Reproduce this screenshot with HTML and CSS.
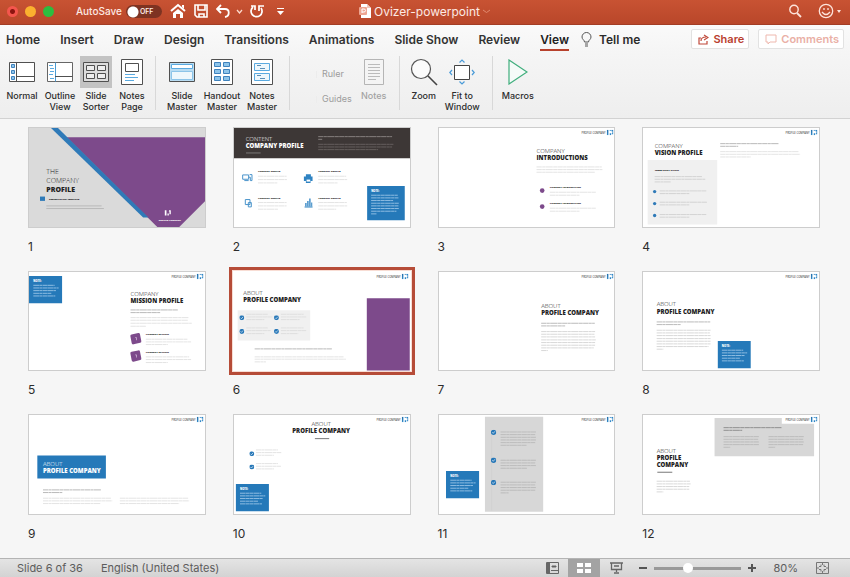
FILE: index.html
```html
<!DOCTYPE html>
<html lang="en">
<head>
<meta charset="utf-8">
<title>Ovizer-powerpoint</title>
<link rel="stylesheet" href="styles.css">
</head>
<body>
<svg class="defs" aria-hidden="true">
  <defs>
    <linearGradient id="blue" x1="0" y1="0" x2="1" y2="1"><stop offset="0" stop-color="#1b5f9a"/><stop offset="1" stop-color="#3d9ad8"/></linearGradient>
    <symbol id="logo" viewBox="0 0 20 17">
      <path d="M0 0h5v17H0z" fill="url(#blue)"/>
      <path d="M9 11h4v6H9zM9 0h3v4H9zM14 0h6v14h-5v-3h2V5h-3z" fill="#2f86c6"/>
    </symbol>
    <symbol id="brand" viewBox="0 0 98 20" overflow="visible">
      <text class="brand-text" x="72" y="13" text-anchor="end">PROFILE COMPANY</text>
      <use href="#logo" x="76" y="1" width="20" height="17"/>
    </symbol>
    <symbol id="check" viewBox="0 0 16 16">
      <circle cx="8" cy="8" r="8" fill="#2878b8"/>
      <path d="M4 8l3 3 5-6" fill="none" stroke="#fff" stroke-width="2"/>
    </symbol>
    <symbol id="note" viewBox="0 0 100 83">
      <path d="M0 0h100v83H0z" fill="#2579b9"/>
      <text class="note-title" x="13" y="17">NOTE:</text>
      <path class="note-line" d="M13 28h64M13 36h76M13 44h68M13 52h54M13 60h66"/>
    </symbol>
  </defs>
</svg>

<header class="titlebar">
  <div class="title-left">
    <span class="lights"><i class="close"></i><i class="minimise"></i><i class="maximise"></i></span>
    <label class="autosave">AutoSave <span class="toggle"><input type="checkbox" aria-label="AutoSave"><span>OFF</span></span></label>
    <div class="quick">
      <button aria-label="Home"><svg width="16" height="16" viewBox="0 0 16 16"><path d="M1 8l7-6 7 6" fill="none" stroke="#fff" stroke-width="2"/><path d="M3 10l5-4 5 4v5h-3v-4H6v4H3zM12 2h2v4l-2-2z" fill="#fff"/></svg></button>
      <button aria-label="Save"><svg width="14" height="14" viewBox="0 0 14 14"><path d="M1 1h12v12H3l-2-2zM4 1v5h7V1M5 13v-3h5v3" fill="none" stroke="#fff" stroke-width="1.600"/></svg></button>
      <button class="undo" aria-label="Undo"><svg width="14" height="14" viewBox="0 0 14 14"><path d="M5 1L1 5l4 4M1 5h8c5 0 5 7 0 8" fill="none" stroke="#fff" stroke-width="1.800"/></svg></button>
      <button class="chev" aria-label="Undo history"><svg width="7" height="5" viewBox="0 0 7 5"><path d="M1 1l2.500 3L6 1" fill="none" stroke="#fbd9cc" stroke-width="1.300"/></svg></button>
      <button class="redo" aria-label="Repeat"><svg width="15" height="15" viewBox="0 0 15 15"><path d="M3 3a5.500 5.500 0 1 0 8 1M1 2h4v4M9 7V2h5" fill="none" stroke="#fff" stroke-width="1.700"/></svg></button>
      <button class="more" aria-label="Customise toolbar"><svg width="7" height="7" viewBox="0 0 7 7"><path d="M0 0h7v1H0zM0 3h7L3.500 7z" fill="#fff"/></svg></button>
    </div>
  </div>
  <div class="doc">
    <svg width="12" height="14" viewBox="0 0 12 14"><path d="M2 0h6l4 4v10H2z" fill="#fff"/><path d="M8 0v4h4" fill="#f0c8bc"/><rect x="0" y="3" width="8" height="8" rx="1" fill="#eda592"/><path d="M3 9V5h2a1 1 0 0 1 0 3H3" fill="none" stroke="#fff"/></svg>
    <h1>Ovizer-powerpoint</h1>
    <svg width="7" height="5" viewBox="0 0 7 5"><path d="M0 1l3.500 2.500L7 1" fill="none" stroke="#e08a70"/></svg>
  </div>
  <div class="title-right">
    <button aria-label="Search"><svg width="14" height="14" viewBox="0 0 14 14"><circle cx="6" cy="5.500" r="4.200" fill="none" stroke="#fde3da" stroke-width="1.400"/><path d="M9 9l4 4" stroke="#fde3da" stroke-width="1.800"/></svg></button>
    <button class="smile" aria-label="Feedback"><svg width="24" height="16" viewBox="0 0 24 16"><circle cx="8" cy="8" r="6.700" fill="none" stroke="#fde3da" stroke-width="1.300"/><path d="M4 9q4 5 8 0M6 5v2M10 5v2" fill="none" stroke="#fde3da" stroke-width="1.300"/><path d="M19 7h4l-2 3z" fill="#fde3da"/></svg></button>
  </div>
</header>

<nav class="tabs">
  <a href="#home">Home</a><a href="#insert">Insert</a><a href="#draw">Draw</a><a href="#design">Design</a><a href="#transitions">Transitions</a><a href="#animations">Animations</a><a href="#slideshow">Slide Show</a><a href="#review">Review</a><a href="#view" class="current" aria-current="page">View</a>
  <button class="tell"><svg width="11" height="15" viewBox="0 0 11 15"><path d="M3.500 10C3.500 8 1 7.500 1 5a4.500 4.500 0 0 1 9 0c0 2.500-2.500 3-2.500 5zM4 12h3M4 14h3" fill="none" stroke="#555"/></svg>Tell me</button>
  <div class="collab">
    <button class="share"><svg width="11" height="11" viewBox="0 0 11 11"><path d="M3 4H1v6h8V7M3 7c0-3 2-4 5-4M6 1l4 2.500L6 6" fill="none" stroke="#c0493a" stroke-width="1.200"/></svg>Share</button>
    <button class="comments"><svg width="12" height="11" viewBox="0 0 12 11"><path d="M1 1h10v7H5L3 10V8H1z" fill="none" stroke="#eeb8ae"/></svg>Comments</button>
  </div>
</nav>

<section class="ribbon" aria-label="View">
  <div class="group">
    <button class="tool"><span class="icon"><svg width="26" height="22" viewBox="0 0 26 22"><path d="M.5 1.500h25v19H.5zM7.500 1.500v19M7.500 15.500h18" fill="#fff" stroke="#505050"/><path d="M2.500 3.500h3v3h-3zM2.500 9.500h3v3h-3zM2.500 15.500h3v3h-3z" fill="#8dc4ea" stroke="#3f82bd"/></svg></span>Normal</button>
    <button class="tool"><span class="icon"><svg width="26" height="22" viewBox="0 0 26 22"><path d="M.5 1.500h25v19H.5z" fill="#fff" stroke="#666"/><path d="M8.500 1.500v19" stroke="#4b9bd2"/><path d="M8 15.500h17.500" stroke="#505050"/><path d="M2 4.500h4M3 7.500h4M3 10.500h4M2 13.500h4M3 17.500h4" stroke="#5aaae0"/></svg></span>Outline<br>View</button>
    <button class="tool active" aria-pressed="true"><span class="icon"><svg width="26" height="22" viewBox="0 0 26 22"><path d="M.5 1.500h25v19H.5z" fill="#ddd" stroke="#505050"/><path d="M3.500 4.500h8v5h-8zM14.500 4.500h8v5h-8zM3.500 12.500h8v5h-8zM14.500 12.500h8v5h-8z" fill="#eee" stroke="#505050"/></svg></span>Slide<br>Sorter</button>
    <button class="tool"><span class="icon"><svg width="22" height="26" viewBox="0 0 22 26"><path d="M.5.5h21v25H.5z" fill="#fff" stroke="#505050"/><path d="M4.500 4.500h13v8h-13z" fill="#fff" stroke="#505050"/><path d="M4 15.500h10M4 18.500h13M4 21.500h9" stroke="#5aaae0"/></svg></span>Notes<br>Page</button>
  </div>
  <div class="group masters">
    <button class="tool"><span class="icon"><svg width="26" height="22" viewBox="0 0 26 22"><path d="M.5 1.500h25v19H.5z" fill="#b9dcf2" stroke="#505050"/><path d="M2.500 3.500h21v4h-21z" fill="#fff" stroke="#5aaae0"/><path d="M2.500 10.500h21v8h-21z" fill="#eef7fc" stroke="#8cc4e8"/></svg></span>Slide<br>Master</button>
    <button class="tool"><span class="icon"><svg width="22" height="26" viewBox="0 0 22 26"><path d="M.5.500h21v25H.5z" fill="#fff" stroke="#505050"/><path d="M3.500 3.500h6v4h-6zM12.500 3.500h6v4h-6zM3.500 10.500h6v4h-6zM12.500 10.500h6v4h-6zM3.500 17.500h6v4h-6zM12.500 17.500h6v4h-6z" fill="#8dc4ea" stroke="#3f82bd"/></svg></span>Handout<br>Master</button>
    <button class="tool"><span class="icon"><svg width="22" height="26" viewBox="0 0 22 26"><path d="M.5.500h21v25H.5z" fill="#fff" stroke="#505050"/><path d="M3.500 4.500h15v7h-15zM3.500 14.500h15v7h-15z" fill="#eef7fc" stroke="#5aaae0"/><path d="M6 6.500h4M9 9.500h5M6 16.500h4M9 19.500h5" stroke="#5a8fb8"/></svg></span>Notes<br>Master</button>
  </div>
  <div class="group show">
    <div class="checks"><label><input type="checkbox" disabled>Ruler</label><label><input type="checkbox" disabled>Guides</label></div>
    <button class="tool" disabled><span class="icon"><svg width="20" height="26" viewBox="0 0 20 26"><path d="M.5.500h19v25H.5z" fill="#f4f4f4" stroke="#b5b5b5"/><path d="M4 5.500h12M4 8.500h12M4 11.500h12M4 14.500h12M4 17.500h12M4 20.500h8" stroke="#bbb"/></svg></span>Notes</button>
  </div>
  <div class="group zoom">
    <button class="tool"><span class="icon"><svg width="28" height="28" viewBox="0 0 28 28"><circle cx="11" cy="11" r="9.500" fill="#fbfbfb" stroke="#555" stroke-width="1.200"/><path d="M18 18l9 9" stroke="#444" stroke-width="1.600"/></svg></span>Zoom</button>
    <button class="tool"><span class="icon"><svg width="26" height="26" viewBox="0 0 26 26"><path d="M5.500 6.500h15v14h-15z" fill="#fff" stroke="#444"/><path d="M10.500 3.500L13 1l2.500 2.500M10.500 22.500L13 25l2.500-2.500M3 11L.800 13.500 3 16M23 11l2.200 2.500L23 16" fill="none" stroke="#4a9bd8" stroke-width="1.200"/></svg></span>Fit to<br>Window</button>
  </div>
  <div class="group macros">
    <button class="tool"><span class="icon"><svg width="20" height="26" viewBox="0 0 20 26"><path d="M1 1v24l18-12z" fill="#f5fbf8" stroke="#3fae7c" stroke-width="1.200"/></svg></span>Macros</button>
  </div>
</section>

<main class="sorter">
  <ol class="slides">
    <li><button class="slide" aria-label="Slide 1"><svg viewBox="0 0 534 302">
      <path d="M0 0h534v302H0z" fill="#dadada"/>
      <path d="M116 31h418v190l-81 81h-63z" fill="#7d4a8b"/>
      <path d="M66 0h21l275 272h-16z" fill="#2f7ab8"/>
      <text class="light big" x="55" y="140">THE</text><text class="light big" x="55" y="168">COMPANY</text><text class="heavy big" x="55" y="195">PROFILE</text>
      <path d="M36 209h15v13H36z" fill="#2f7ab8"/><text class="label" x="63" y="218">PRESENTATION TEMPLATE</text>
      <path d="M55 237h166M55 245h173" stroke="#b9b9b9" stroke-width="3"/>
      <path d="M411 250h5v16h-5zM419 260h4v6h-4zM424 250h5v12h-4v-8h-2z" fill="#fff"/><text class="label white" x="393" y="283">PROFILE COMPANY</text>
    </svg></button><span>1</span></li>
    <li><button class="slide" aria-label="Slide 2"><svg viewBox="0 0 534 302">
      <path d="M0 0h534v94H0z" fill="#3d3736"/>
      <text class="light white" x="38" y="42">CONTENT</text><text class="heavy white" x="38" y="62">COMPANY PROFILE</text>
      <path d="M39 78h44" stroke="#999" stroke-width="2"/>
      <path class="copy pale" d="M256 29h222M256 37h12"/><path class="copy faint" d="M256 52h226M256 60h222M256 68h180"/>
      <text class="label" x="75" y="136">COMPANY PROFILE</text><text class="label" x="256" y="136">COMPANY PROFILE</text>
      <text class="label" x="75" y="216">COMPANY PROFILE</text><text class="label" x="256" y="216">COMPANY PROFILE</text>
      <path class="copy" d="M75 148h86M75 158h87M75 168h58M256 148h84M256 158h87M256 168h58M75 227h86M75 237h86M75 247h60M256 227h86M256 237h87M256 247h54"/>
      <path d="M29 144h18v13H29zM34 161h13M47 151h5v10h5v-18h-7M37 218h14v15H37zM46 227h9v13h-9z" fill="none" stroke="#4a94cb" stroke-width="3"/>
      <path d="M219 142h15v7h5v13h-6v6h-14v-6h-6v-13h6zM215 239h24v3h-24zM217 228h4v10h-4zM223 222h4v16h-4zM229 215h4v23h-4zM235 227h3v11h-3z" fill="#2f83c2"/><path d="M221 158h11v6h-11z" fill="#fff"/>
      <path d="M403 177h113v103H403z" fill="#2579b9"/><text class="note-title" x="415" y="194">NOTE:</text>
      <path class="note-line" d="M415 205h80M415 213h82M415 221h66M415 229h84M415 237h82M415 245h84M415 253h76M415 261h16"/>
    </svg></button><span>2</span></li>
    <li><button class="slide" aria-label="Slide 3"><svg viewBox="0 0 534 302">
      <use href="#brand" x="431" y="7" width="98" height="20"/>
      <text class="light" x="296" y="77">COMPANY</text><text class="heavy" x="296" y="98">INTRODUCTIONS</text>
      <path class="copy" d="M296 120h196M296 128h198M296 136h176M336 196h138M336 205h90M336 244h138M336 253h90"/>
      <text class="label" x="336" y="184">COMPANY INTRODUCTION</text><text class="label" x="336" y="232">COMPANY INTRODUCTION</text>
      <circle cx="313" cy="191" r="7" fill="#7d4a8b"/><circle cx="313" cy="239" r="7" fill="#7d4a8b"/>
    </svg></button><span>3</span></li>
    <li><button class="slide" aria-label="Slide 4"><svg viewBox="0 0 534 302">
      <use href="#brand" x="431" y="7" width="98" height="20"/>
      <path d="M17 99h209v194H17z" fill="#f0f0f0"/>
      <text class="light" x="38" y="62">COMPANY</text><text class="heavy" x="38" y="83">VISION PROFILE</text>
      <text class="label" x="38" y="133">THREE POINT VISION</text>
      <path class="copy dark" d="M235 50h176M235 58h54"/><path class="copy" d="M235 74h235M235 82h240M235 90h92"/>
      <path class="copy mid" d="M38 149h142M38 157h153M38 165h48M53 192h140M53 200h90M53 226h142M53 234h90M53 263h140M53 271h90"/>
      <circle cx="38" cy="194" r="5" fill="#2f7ab8"/><circle cx="38" cy="230" r="5" fill="#2f7ab8"/><circle cx="38" cy="266" r="5" fill="#2f7ab8"/>
    </svg></button><span>4</span></li>
    <li><button class="slide" aria-label="Slide 5"><svg viewBox="0 0 534 302">
      <use href="#brand" x="431" y="7" width="98" height="20"/><use href="#note" x="3" y="15" width="100" height="83"/>
      <text class="light" x="308" y="76">COMPANY</text><text class="heavy" x="308" y="97">MISSION PROFILE</text>
      <path class="copy dark" d="M308 117h142M308 125h90"/>
      <path class="copy" d="M308 140h174M308 148h172M308 157h184M308 166h46M354 205h126M354 213h136M354 221h66M354 258h130M354 266h136M354 275h66"/>
      <text class="label" x="354" y="191">COMPANY MISSION</text><text class="label" x="354" y="245">COMPANY MISSION</text>
      <path d="M312 195l20-4 4 20-20 5zM312 247l20-4 4 20-20 5z" fill="#7d4a8b" stroke="#7d4a8b" stroke-width="9" stroke-linejoin="round"/>
      <path d="M322 200h4v8M322 252h4v8" fill="none" stroke="#dcc6e2" stroke-width="2"/>
    </svg></button><span>5</span></li>
    <li><button class="slide selected" aria-label="Slide 6" aria-pressed="true"><svg viewBox="0 0 534 302">
      <use href="#brand" x="431" y="7" width="98" height="20"/>
      <path d="M402 82h129v217H402z" fill="#7d4a8b"/><path d="M14 118h218v91H14z" fill="#f0f0f0"/>
      <text class="light" x="31" y="72">ABOUT</text><text class="heavy" x="31" y="93">PROFILE COMPANY</text>
      <use href="#check" x="19" y="133" width="15" height="15"/><use href="#check" x="123" y="133" width="15" height="15"/><use href="#check" x="19" y="174" width="15" height="15"/><use href="#check" x="123" y="174" width="15" height="15"/>
      <path class="copy" d="M40 130h65M40 138h78M40 146h54M144 130h68M144 138h76M144 146h56M40 171h65M40 179h73M40 188h54M144 171h68M144 179h76M144 188h52M65 258h267M65 265h274M65 273h34"/>
      <path class="copy dark" d="M65 234h232"/>
    </svg></button><span>6</span></li>
    <li><button class="slide" aria-label="Slide 7"><svg viewBox="0 0 534 302">
      <use href="#brand" x="431" y="7" width="98" height="20"/>
      <text class="light" x="310" y="110">ABOUT</text><text class="heavy" x="310" y="132">PROFILE COMPANY</text>
      <path class="copy dark" d="M310 157h161M310 165h72"/>
      <path class="copy mid" d="M310 182h162M310 190h160M310 198h162M310 207h164M310 215h162M310 223h162M310 231h158M310 239h20"/>
    </svg></button><span>7</span></li>
    <li><button class="slide" aria-label="Slide 8"><svg viewBox="0 0 534 302">
      <use href="#brand" x="431" y="7" width="98" height="20"/><use href="#note" x="227" y="210" width="100" height="83"/>
      <text class="light" x="44" y="106">ABOUT</text><text class="heavy" x="44" y="128">PROFILE COMPANY</text>
      <path class="copy dark" d="M44 153h161M44 161h72"/>
      <path class="copy mid" d="M44 178h162M44 186h160M44 194h162M44 203h162M44 211h162M44 219h162M44 227h156M44 235h20"/>
    </svg></button><span>8</span></li>
    <li><button class="slide" aria-label="Slide 9"><svg viewBox="0 0 534 302">
      <use href="#brand" x="431" y="7" width="98" height="20"/>
      <path d="M28 125h206v69H28z" fill="#2579b9"/>
      <text class="light white" x="45" y="156">ABOUT</text><text class="heavy white" x="45" y="178">PROFILE COMPANY</text>
      <path class="copy dark" d="M45 228h174M45 236h58"/>
      <path class="copy" d="M45 253h204M45 261h208M45 269h172M276 253h206M276 261h208M276 269h178"/>
    </svg></button><span>9</span></li>
    <li><button class="slide" aria-label="Slide 10"><svg viewBox="0 0 534 302">
      <use href="#brand" x="431" y="7" width="98" height="20"/><use href="#note" x="8" y="210" width="100" height="83"/>
      <text class="light" x="265" y="37" text-anchor="middle">ABOUT</text><text class="heavy" x="265" y="58" text-anchor="middle">PROFILE COMPANY</text>
      <path d="M246 74h43" stroke="#777" stroke-width="3"/>
      <use href="#check" x="49" y="112" width="15" height="15"/><use href="#check" x="49" y="152" width="15" height="15"/>
      <path class="copy" d="M69 108h66M69 116h76M69 124h54M69 149h66M69 157h75M69 165h54"/>
    </svg></button><span>10</span></li>
    <li><button class="slide" aria-label="Slide 11"><svg viewBox="0 0 534 302">
      <use href="#brand" x="431" y="7" width="98" height="20"/><use href="#note" x="24" y="171" width="100" height="83"/>
      <path d="M141 8h175v286H141z" fill="#d7d7d7"/><path d="M161 60v230" stroke="#c9c9c9"/>
      <use href="#check" x="159" y="47" width="16" height="16"/><use href="#check" x="159" y="131" width="16" height="16"/><use href="#check" x="159" y="198" width="16" height="16"/>
      <path class="copy deep" d="M188 54h106M188 62h104M188 70h106M188 78h106M188 86h104M188 94h78M188 139h106M188 147h104M188 155h106M188 163h80M188 205h106M188 213h104M188 221h106M188 229h104M188 237h24"/>
    </svg></button><span>11</span></li>
    <li><button class="slide" aria-label="Slide 12"><svg viewBox="0 0 534 302">
      <path d="M218 12h202v17h97v98H218z" fill="#d7d7d7"/><use href="#brand" x="431" y="7" width="98" height="20"/>
      <text class="light" x="44" y="117">ABOUT</text><text class="heavy" x="44" y="139">PROFILE</text><text class="heavy" x="44" y="160">COMPANY</text>
      <path d="M46 175h45" stroke="#777" stroke-width="3"/>
      <path class="copy mid" d="M44 202h100M44 210h102M44 218h98M44 226h98M44 234h20"/>
      <path class="copy ink" d="M245 41h174M245 49h56"/>
      <path class="copy deep" d="M245 68h106M245 76h104M245 84h106M245 92h106M245 100h20M380 68h106M380 76h104M380 84h106M380 92h104M380 100h20"/>
    </svg></button><span>12</span></li>
    <li><button class="slide" aria-label="Slide 13"><svg viewBox="0 0 534 302"></svg></button></li>
    <li><button class="slide" aria-label="Slide 14"><svg viewBox="0 0 534 302"></svg></button></li>
    <li><button class="slide" aria-label="Slide 15"><svg viewBox="0 0 534 302"></svg></button></li>
    <li><button class="slide" aria-label="Slide 16"><svg viewBox="0 0 534 302"></svg></button></li>
  </ol>
</main>

<footer class="status">
  <span>Slide 6 of 36</span><span>English (United States)</span>
  <div class="view-controls">
    <button class="view" aria-label="Normal view"><svg width="13" height="12" viewBox="0 0 13 12"><path d="M.5.500h12v11H.5zM5 8.500h7" fill="none" stroke="#666"/><path d="M1 1h3v10H1z" fill="#666"/><path d="M6 4h4v1H6z" fill="#555" stroke="#666"/></svg></button>
    <button class="view on" aria-label="Slide sorter view" aria-pressed="true"><svg width="14" height="11" viewBox="0 0 14 11"><path d="M0 0h6v4H0zM8 0h6v4H8zM0 6h6v4H0zM8 6h6v4H8z" fill="#fff"/></svg></button>
    <button class="view" aria-label="Slide show"><svg width="13" height="12" viewBox="0 0 13 12"><path d="M0 1h13M1.500 1v6.500h10V1M4 4h5M6.500 8v2M4 11h5" fill="none" stroke="#666" stroke-width="1.300"/></svg></button>
    <button class="step" aria-label="Zoom out"><svg width="8" height="8" viewBox="0 0 8 8"><path d="M0 3h8v2H0z" fill="#555"/></svg></button>
    <input type="range" min="0" max="100" value="37" aria-label="Zoom">
    <button class="step" aria-label="Zoom in"><svg width="8" height="8" viewBox="0 0 8 8"><path d="M0 3h3V0h2v3h3v2H5v3H3V5H0z" fill="#555"/></svg></button>
    <span class="percent">80%</span>
    <button class="fit" aria-label="Fit to window"><svg width="13" height="12" viewBox="0 0 13 12"><path d="M.5.500h12v11H.5zM6.500 0v3M6.500 9v3M0 6h3M10 6h3M3 4.500h2V2.500M8 2.500v2h2M3 7.500h2v2M8 9.500v-2h2" fill="none" stroke="#777"/></svg></button>
  </div>
</footer>
</body>
</html>
```
FILE: styles.css
```css
* { box-sizing: border-box; }

body {
  margin: 0;
  height: 100vh;
  display: flex;
  flex-direction: column;
  overflow: hidden;
  font-family: Inter, "Liberation Sans", sans-serif;
  font-size: 11px;
  color: #2c2c2c;
  background: #f6f6f6;
}

button {
  font: inherit;
  color: inherit;
  background: none;
  border: 0;
  padding: 0;
}

svg { display: block; }

.defs { position: absolute; width: 0; height: 0; }

/* Title bar */
.titlebar {
  display: grid;
  grid-template-columns: 1fr auto 1fr;
  align-items: center;
  height: 25px;
  padding: 0 8px 2px 7px;
  color: #fdeae4;
  background: linear-gradient(#c85333, #b9472a);
  border-bottom: 1px solid #a33d25;
}

.title-left, .title-right, .doc, .quick, .lights, .autosave { display: flex; align-items: center; }

.lights { gap: 7px; }
.lights i { width: 11px; height: 11px; border-radius: 50%; }
.lights .close { background: radial-gradient(circle, #8c1510 0 2px, #f4564d 3px); }
.lights .minimise { background: #fbb12f; }
.lights .maximise { background: #2cbd40; }

.autosave { gap: 4px; margin-left: 22px; font-size: 10px; font-weight: 500; }
.toggle { position: relative; display: block; width: 36px; height: 13px; }
.toggle input {
  appearance: none;
  display: block;
  margin: 0;
  width: 100%;
  height: 100%;
  border-radius: 7px;
  background: radial-gradient(circle at 7px 7px, #fff 0 5px, #7d3322 6px);
}
.toggle span { position: absolute; left: 14px; top: 0; font-size: 7px; line-height: 13px; font-weight: 600; }

.quick { margin-left: 8px; }
.quick button { margin-right: 8px; }
.quick .undo { margin-right: 6px; }
.quick .chev { margin-right: 7px; }
.quick .redo { margin-right: 12px; }
.quick .more { margin-right: 0; }

.doc { gap: 3px; }
.doc h1 { margin: 0; font-size: 12px; font-weight: 400; }

.title-right { justify-content: flex-end; gap: 16px; }

/* Tabs */
.tabs {
  display: flex;
  align-items: center;
  height: 28px;
  padding: 0 6px;
  font-size: 12px;
  font-weight: 600;
  background: linear-gradient(#fafafa, #f5f5f5);
}
.tabs a {
  margin-right: 20px;
  padding-top: 4px;
  line-height: 18px;
  border-bottom: 2px solid transparent;
  color: #333;
  text-decoration: none;
  white-space: nowrap;
}
.tabs .current { margin-right: 12px; color: #222; border-color: #b7412c; }
.tell { display: flex; align-items: center; gap: 7px; white-space: nowrap; }
.collab { display: flex; gap: 9px; margin-left: auto; }
.collab button {
  display: flex;
  align-items: center;
  gap: 4px;
  height: 20px;
  padding: 0 4px 0 6px;
  font-size: 11px;
  border: 1px solid #e2e2e2;
  border-radius: 2px;
  background: #fff;
}
.collab .share { color: #b9402f; }
.collab .comments { color: #eab0a6; }

/* Ribbon */
.ribbon {
  display: flex;
  height: 66px;
  padding: 3px 3px 8px;
  background: linear-gradient(#f5f5f5, #eeeeee);
  border-bottom: 1px solid #d2d2d2;
}
.group { display: flex; align-items: flex-start; }
.group + .group { border-left: 1px solid #d8d8d8; }
.group:first-child { padding-right: 4px; }
.tool {
  min-width: 34px;
  padding: 0 3px;
  font-size: 9px;
  font-weight: 500;
  line-height: 11px;
  text-align: center;
  white-space: nowrap;
}
.icon {
  display: flex;
  align-items: center;
  justify-content: center;
  width: 32px;
  height: 32px;
  margin: 0 auto 2px;
}
.tool.active { padding: 0 1px; }
.active .icon { background: #c3c3c3; }
.masters { padding: 0 7px 0 6px; }
.masters .tool { min-width: 40px; padding: 0; }
.show { padding: 0 6px 0 20px; }
.show .tool:disabled { color: #a3a3a3; }
.checks { display: flex; flex-direction: column; gap: 11px; padding-top: 11px; margin-right: 3px; }
.checks label { display: flex; align-items: center; gap: 5px; font-size: 9px; line-height: 14px; color: #9c9c9c; }
.checks input { appearance: none; width: 7px; height: 7px; margin: 0; border-right: 1px solid #ececec; }
.zoom { gap: 3px; padding: 0 11px 0 7px; }
.zoom .tool { padding: 0 1px; }
.macros { padding-left: 6px; }

/* Slide sorter */
.sorter { flex: 1; min-height: 0; overflow: hidden; padding: 8px 30px 0 28px; }
.slides {
  display: grid;
  grid-template-columns: repeat(4, 1fr);
  column-gap: 27px;
  margin: 0;
  padding: 0;
  list-style: none;
}
.slides span {
  display: block;
  height: 43px;
  padding-top: 10px;
  font-size: 12px;
  line-height: 18px;
}
.slide {
  display: block;
  width: 100%;
  background: #fff;
  outline: 1px solid #cdcdcd;
  outline-offset: -1px;
}
.slide svg { width: 100%; }
.slide.selected { outline: 0; box-shadow: 0 0 0 1px #f8ddd4, 0 0 0 4px #b64c38; }

.slide text { font-family: "Open Sans", sans-serif; fill: #222; }
.slide .light { font-size: 18px; font-weight: 300; }
.slide .heavy { font-size: 18px; font-weight: 800; }
.slide .big { font-size: 21px; }
.slide .label { font-size: 7px; font-weight: 800; }
.slide .white { fill: #fff; }
.slide .brand-text, .brand-text { font: 500 8px "Open Sans", sans-serif; fill: #222; }
.slide .note-title, .note-title { font: 800 8px "Open Sans", sans-serif; fill: #fff; }

/* Body copy too small to read is drawn as word-length strokes */
.note-line { stroke: #8fbde2; stroke-width: 3; stroke-dasharray: 17 1 9 1 13 1; }
.copy { fill: none; stroke: #d6d6d6; stroke-width: 2; stroke-dasharray: 16 1 9 1 22 1 12 1; }
.copy.mid { stroke: #c6c6c6; }
.copy.dark { stroke: #979797; }
.copy.deep { stroke: #aeaeae; }
.copy.ink { stroke: #6c6c6c; }
.copy.pale { stroke: #aaa6a5; }
.copy.faint { stroke: #787271; }

/* Status bar */
.status {
  display: flex;
  align-items: center;
  gap: 18px;
  height: 19px;
  padding: 0 21px 0 17px;
  color: #5c5c5c;
  background: linear-gradient(#e4e4e4, #d3d3d3);
  border-top: 1px solid #b4b4b4;
}
.view-controls { display: flex; align-items: center; align-self: stretch; margin-left: auto; }
.view { display: flex; align-items: center; justify-content: center; width: 32px; height: 100%; }
.view.on { background: #a3a3a3; }
.step { margin-left: 7px; }
.view-controls input {
  appearance: none;
  width: 87px;
  height: 10px;
  margin: 0 0 0 7px;
  background: linear-gradient(#999, #999) center / 100% 3px no-repeat;
}
.view-controls input::-webkit-slider-thumb {
  appearance: none;
  width: 10px;
  height: 10px;
  border-radius: 50%;
  background: #fff;
}
.percent { margin: 0 18px 0 17px; }
```
